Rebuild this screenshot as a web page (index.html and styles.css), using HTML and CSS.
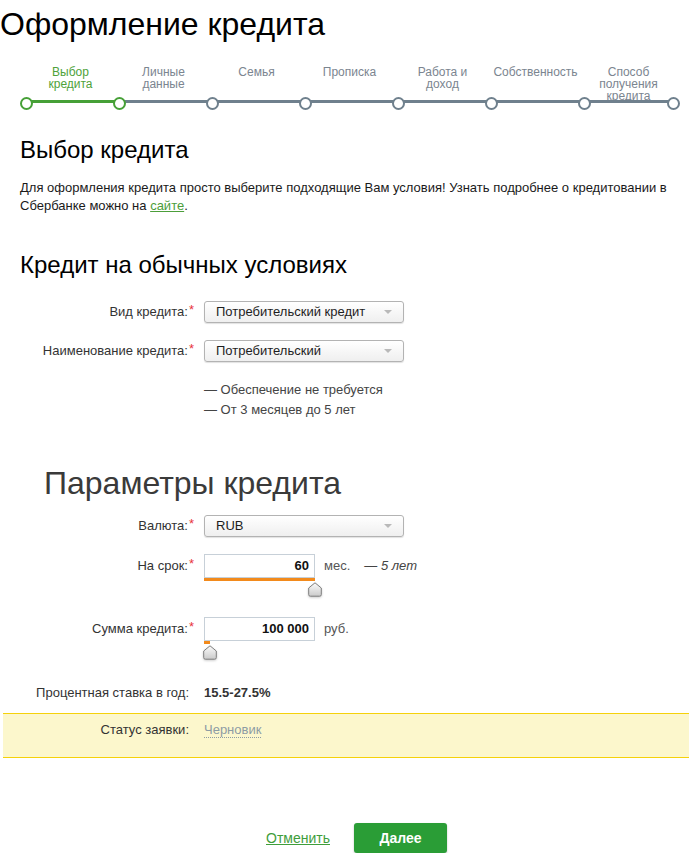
FILE: index.html
```html
<!DOCTYPE html>
<html lang="ru">
<head>
<meta charset="utf-8">
<title>Оформление кредита</title>
<link rel="stylesheet" href="styles.css">
</head>
<body>
<h1 class="title">Оформление кредита</h1>

<nav class="stepper">
  <div class="step done"><div class="step-label">Выбор<br>кредита</div><div class="step-track"></div></div>
  <div class="step current"><div class="step-label">Личные<br>данные</div><div class="step-track"></div></div>
  <div class="step"><div class="step-label">Семья</div><div class="step-track"></div></div>
  <div class="step"><div class="step-label">Прописка</div><div class="step-track"></div></div>
  <div class="step"><div class="step-label">Работа и<br>доход</div><div class="step-track"></div></div>
  <div class="step"><div class="step-label">Собственность</div><div class="step-track"></div></div>
  <div class="step last"><div class="step-label">Способ<br>получения<br>кредита</div><div class="step-track"></div></div>
</nav>

<section class="intro">
  <h2 class="section-title">Выбор кредита</h2>
  <p class="lead">Для оформления кредита просто выберите подходящие Вам условия! Узнать подробнее о кредитовании в Сбербанке можно на <a class="link" href="#">сайте</a>.</p>
  <h2 class="section-title second">Кредит на обычных условиях</h2>
</section>

<div class="field first">
  <div class="label">Вид кредита:<span class="req">*</span></div>
  <div class="select"><span>Потребительский кредит</span><i class="caret"></i></div>
</div>
<div class="field gap17">
  <div class="label">Наименование кредита:<span class="req">*</span></div>
  <div class="select"><span>Потребительский</span><i class="caret"></i></div>
</div>
<ul class="notes">
  <li>— Обеспечение не требуется</li>
  <li>— От 3 месяцев до 5 лет</li>
</ul>

<h2 class="params-title">Параметры кредита</h2>

<div class="field valuta">
  <div class="label">Валюта:<span class="req">*</span></div>
  <div class="select"><span>RUB</span><i class="caret"></i></div>
</div>

<div class="field gap17 top">
  <div class="label tall">На срок:<span class="req">*</span></div>
  <div class="slider-field">
    <div class="num-input">60</div>
    <div class="track"><div class="fill" style="width:100%"></div></div>
    <div class="thumb-row"><div class="thumb" style="margin-left:calc(100% - 7px)"><svg width="14" height="15" viewBox="0 0 14 15"><defs><linearGradient id="tg1" x1="0" y1="0" x2="0" y2="1"><stop offset="0" stop-color="#fbfbfb"/><stop offset="1" stop-color="#cbcbcb"/></linearGradient></defs><path d="M7 0.8 L13.3 6 L13.3 12.6 Q13.3 14.2 11.7 14.2 L2.3 14.2 Q0.7 14.2 0.7 12.6 L0.7 6 Z" fill="url(#tg1)" stroke="#7f7f7f" stroke-width="1"/></svg></div></div>
  </div>
  <div class="unit">мес.</div>
  <div class="hint">— 5 лет</div>
</div>

<div class="field sum top">
  <div class="label tall">Сумма кредита:<span class="req">*</span></div>
  <div class="slider-field">
    <div class="num-input">100 000</div>
    <div class="track"><div class="fill" style="width:6px"></div></div>
    <div class="thumb-row"><div class="thumb" style="margin-left:-1px"><svg width="14" height="15" viewBox="0 0 14 15"><defs><linearGradient id="tg2" x1="0" y1="0" x2="0" y2="1"><stop offset="0" stop-color="#fbfbfb"/><stop offset="1" stop-color="#cbcbcb"/></linearGradient></defs><path d="M7 0.8 L13.3 6 L13.3 12.6 Q13.3 14.2 11.7 14.2 L2.3 14.2 Q0.7 14.2 0.7 12.6 L0.7 6 Z" fill="url(#tg2)" stroke="#7f7f7f" stroke-width="1"/></svg></div></div>
  </div>
  <div class="unit">руб.</div>
</div>

<div class="field rate">
  <div class="label plain">Процентная ставка в год:</div>
  <div class="rate-value">15.5-27.5%</div>
</div>

<div class="status-band">
  <div class="field">
    <div class="label plain band-label">Статус заявки:</div>
    <a class="status" href="#">Черновик</a>
  </div>
</div>

<div class="actions">
  <a class="cancel" href="#">Отменить</a>
  <button class="next" type="button">Далее</button>
</div>
</body>
</html>
```

FILE: styles.css
```css
* { box-sizing: border-box; }

body {
  margin: 0;
  font-family: "Liberation Sans", Arial, sans-serif;
  color: #333;
  background: #fff;
  font-size: 13px;
}

.title {
  margin: 6px 0 0;
  font-size: 32px;
  line-height: 36px;
  font-weight: normal;
  color: #000;
}

/* stepper */
.stepper {
  display: flex;
  margin: 24px 0 0 24px;
  width: 651px;
}
.step {
  flex: 0 0 93px;
  position: relative;
}
.step-label {
  height: 34px;
  font-size: 12px;
  line-height: 12px;
  text-align: center;
  color: #7b8590;
}
.step-track {
  position: relative;
  height: 3px;
  background: #6f808d;
}
.step-track::before,
.step.last .step-track::after {
  content: "";
  position: absolute;
  top: -3px;
  width: 9px;
  height: 9px;
  border-radius: 50%;
  border: 2px solid #6f808d;
  background: #fff;
}
.step-track::before { left: -4px; }
.step.last .step-track::after { right: -5px; }

.step.done .step-label { color: #4ea23a; }
.step.done .step-track { background: #46a037; }
.step.done .step-track::before,
.step.current .step-track::before { border-color: #46a037; }

/* intro */
.intro {
  padding: 0 10px 0 20px;
}
.section-title {
  margin: 34px 0 0;
  font-size: 24px;
  line-height: 26px;
  font-weight: normal;
  color: #000;
}
.section-title.second { margin-top: 37px; }
.lead {
  margin: 16px 0 0;
  font-size: 13px;
  line-height: 18px;
  color: #1a1a1a;
}
.link {
  color: #4c9e3a;
  text-decoration: underline;
}

/* form fields */
.field {
  display: flex;
  align-items: center;
}
.field.top { align-items: flex-start; }
.field.first { margin-top: 23px; }
.field.gap17 { margin-top: 17px; }
.field.valuta { margin-top: 14px; }
.field.sum { margin-top: 20px; }
.field.rate { margin-top: 24px; }

.label {
  flex: 0 0 194px;
  margin-right: 10px;
  text-align: right;
  line-height: 22px;
  color: #333;
  white-space: nowrap;
}
.label.tall { line-height: 24px; }
.label.plain { padding-right: 5px; line-height: 18px; }
.label.band-label { flex-basis: 191px; }
.req {
  color: #e8333a;
  margin-left: 1px;
  position: relative;
  top: -2px;
}

.select {
  position: relative;
  width: 200px;
  height: 22px;
  padding-left: 11px;
  line-height: 20px;
  color: #1e1e1e;
  border: 1px solid #b3b3b3;
  border-radius: 3px;
  background: linear-gradient(#ffffff, #efefef);
  box-shadow: 0 1px 1px rgba(0, 0, 0, 0.12);
}
.caret {
  position: absolute;
  right: 11px;
  top: 8px;
  width: 0;
  height: 0;
  border-left: 4px solid transparent;
  border-right: 4px solid transparent;
  border-top: 4px solid #b9b9b9;
}

.notes {
  list-style: none;
  margin: 18px 0 0 204px;
  padding: 0;
  line-height: 20px;
  color: #444;
}

.params-title {
  margin: 45px 0 0;
  padding-left: 44px;
  font-size: 32px;
  line-height: 36px;
  font-weight: normal;
  color: #3a3a3a;
}

/* slider inputs */
.slider-field {
  width: 111px;
}
.num-input {
  height: 24px;
  border: 1px solid #c7d0d8;
  text-align: right;
  padding-right: 5px;
  line-height: 22px;
  font-weight: bold;
  color: #111;
  background: #fff;
}
.track {
  height: 3px;
}
.fill {
  height: 3px;
  background: #f28a1c;
}
.thumb-row {
  margin-top: 1px;
  height: 15px;
}
.thumb {
  width: 14px;
  height: 15px;
  filter: drop-shadow(0 1px 1px rgba(0, 0, 0, 0.2));
}
.thumb svg { display: block; }

.unit {
  margin-left: 9px;
  line-height: 24px;
  color: #555;
}
.hint {
  margin-left: 14px;
  line-height: 24px;
  font-style: italic;
  color: #444;
}

.rate-value {
  font-weight: bold;
  line-height: 18px;
  color: #333;
}

/* status */
.status-band {
  margin: 11px 3px 0;
  padding: 7px 0 18px;
  background: #fcf7cc;
  border-top: 1px solid #f5d10a;
  border-bottom: 1px solid #f5d10a;
}
.status {
  color: #8d9ca4;
  text-decoration: none;
  border-bottom: 1px dotted #8d9ca4;
  line-height: 15px;
}

/* actions */
.actions {
  display: flex;
  align-items: center;
  gap: 24px;
  margin-top: 65px;
  padding-left: 266px;
}
.cancel {
  font-size: 14px;
  color: #3f9e3b;
  text-decoration: underline;
}
.next {
  width: 93px;
  height: 30px;
  border: none;
  border-radius: 3px;
  background: #2a9d36;
  color: #fff;
  font-family: "Liberation Sans", Arial, sans-serif;
  font-size: 14px;
  font-weight: bold;
  box-shadow: 0 1px 2px rgba(0, 0, 0, 0.25);
  cursor: pointer;
}
```
